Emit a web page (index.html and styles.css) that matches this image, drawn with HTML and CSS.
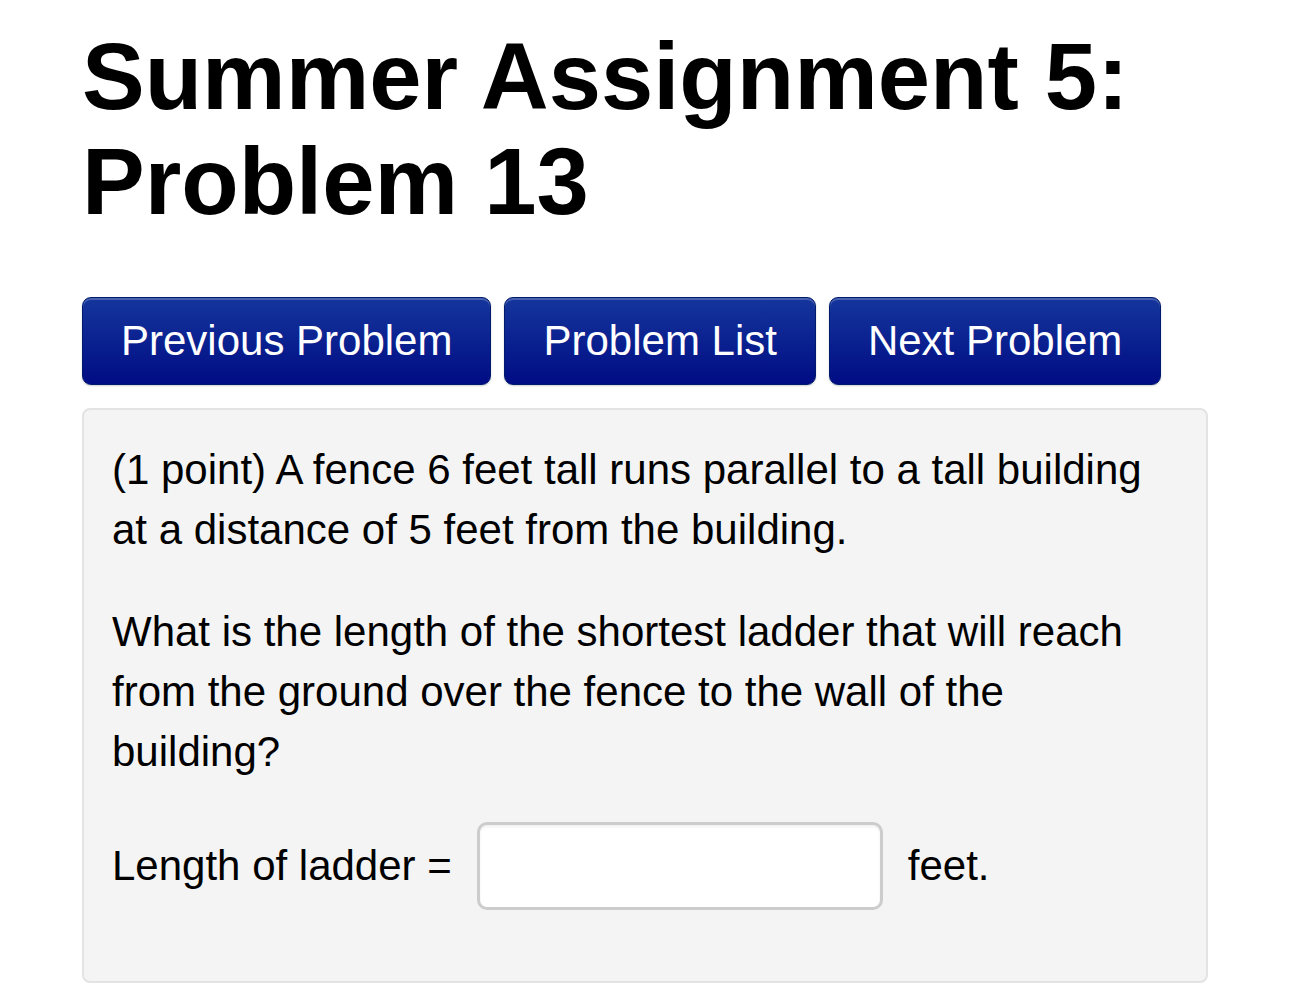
FILE: index.html
```html
<!DOCTYPE html>
<html lang="en">
<head>
  <meta charset="UTF-8" />
  <title>Summer Assignment 5: Problem 13</title>
  <link rel="stylesheet" href="styles.css">
</head>
<body>

  <div class="page">
    <h1>Summer Assignment 5: Problem 13</h1>

    <div class="nav">
      <a href="#" class="nav-button">Previous Problem</a>
      <a href="#" class="nav-button">Problem List</a>
      <a href="#" class="nav-button">Next Problem</a>
    </div>

    <div class="problem">
      <p>(1 point) A fence 6 feet tall runs parallel to a tall building at a distance of 5 feet from the building.</p>
      <p>What is the length of the shortest ladder that will reach from the ground over the fence to the wall of the building?</p>
      <p class="answer-row">
        Length of ladder = <input type="text" class="answer" /> feet.
      </p>
    </div>
  </div>

</body>
</html>
```

FILE: styles.css
```css
body {
  font-family: "Liberation Sans", Arial, sans-serif;
  background: #ffffff;
  color: #000000;
  margin: 0;
}

.page {
  padding: 24px 82px 0 82px;
  width: 1126px;
}

h1 {
  font-size: 94px;
  line-height: 105px;
  font-weight: bold;
  margin: 0 0 63px 0;
  width: 1100px;
}

.nav {
  display: flex;
  gap: 13px;
  margin-bottom: 23px;
}

.nav-button {
  display: block;
  height: 86px;
  line-height: 86px;
  padding: 0 38px;
  font-size: 42px;
  color: #ffffff;
  text-decoration: none;
  background: linear-gradient(to bottom, #15369c, #000c84);
  border: 1px solid #001a6e;
  border-radius: 9px;
  box-shadow: inset 0 2px 0 rgba(255, 255, 255, 0.22), 0 1px 2px rgba(0, 0, 0, 0.2);
}

.problem {
  background-color: #f4f4f4;
  border: 2px solid #e3e3e3;
  border-radius: 8px;
  padding: 30px 28px 71px 28px;
  font-size: 42px;
  line-height: 60px;
}

.problem p {
  margin: 0 0 42px 0;
}

.problem p.answer-row {
  margin: -2px 0 0 0;
  display: flex;
  align-items: center;
  gap: 25px;
  height: 88px;
}

.answer {
  width: 406px;
  height: 88px;
  border: 3px solid #cccccc;
  border-radius: 10px;
  background: #ffffff;
  box-sizing: border-box;
  box-shadow: inset 0 2px 3px rgba(0, 0, 0, 0.06);
  font-size: 40px;
}
```
